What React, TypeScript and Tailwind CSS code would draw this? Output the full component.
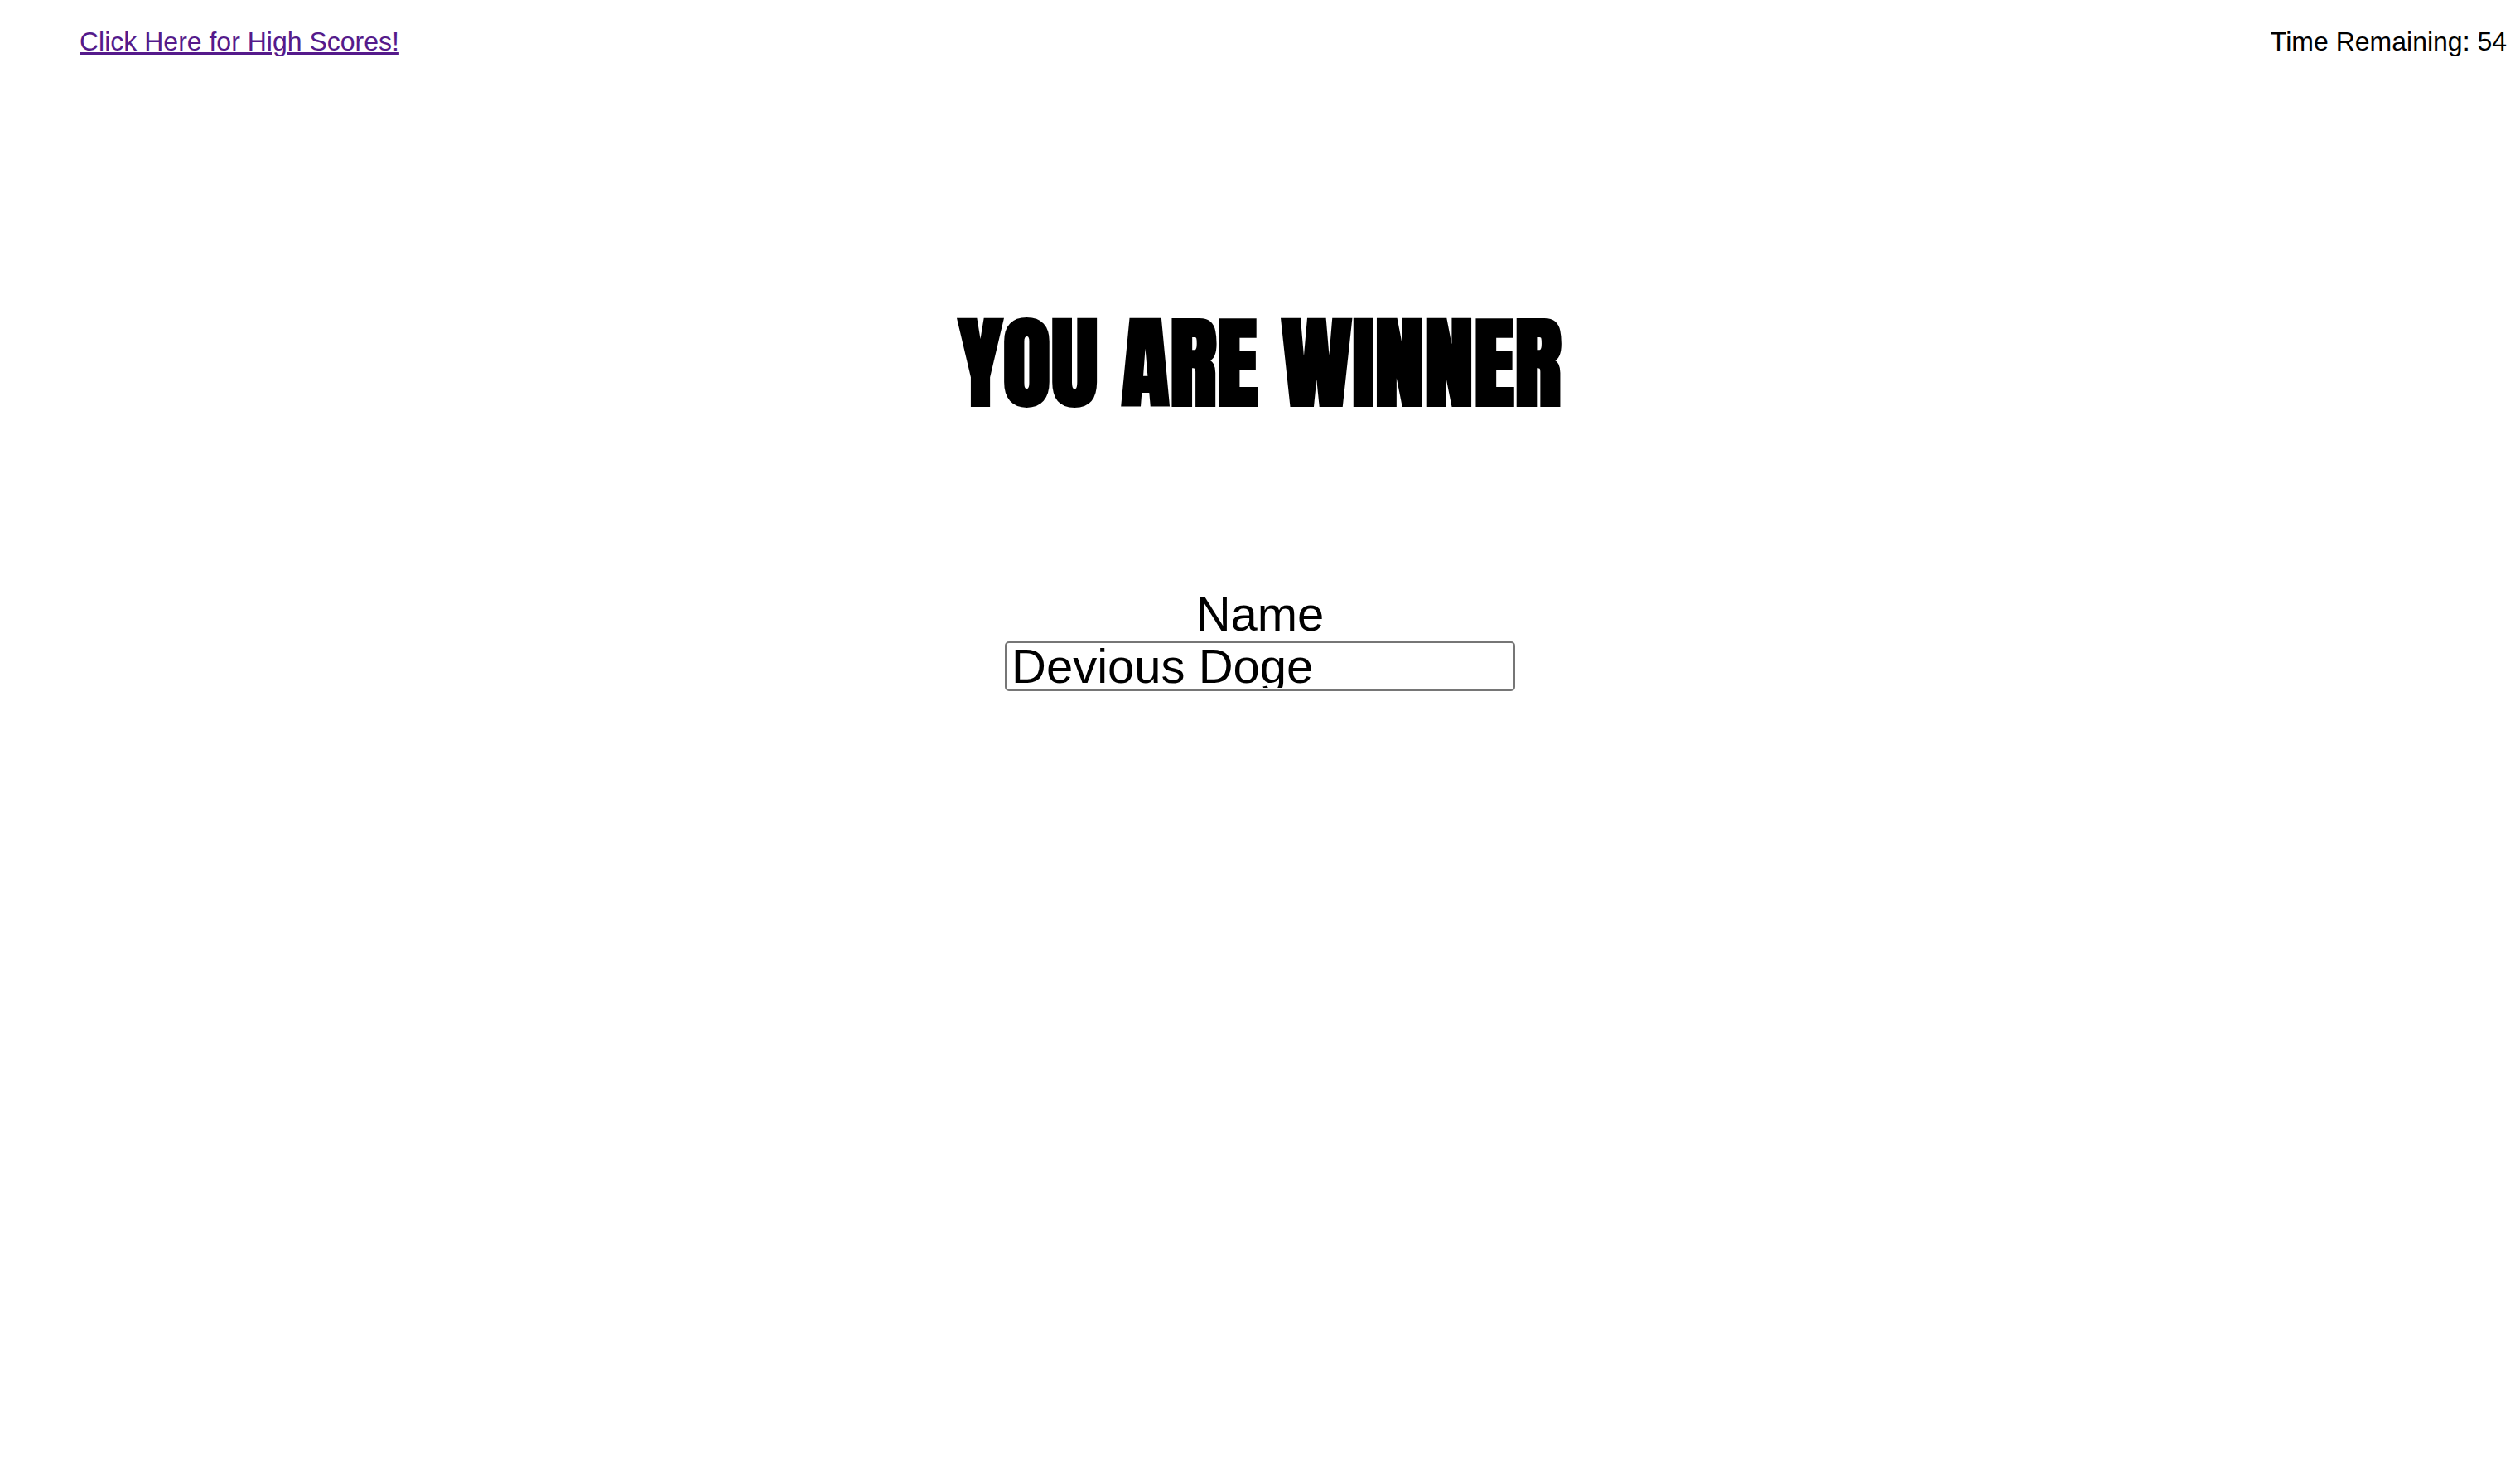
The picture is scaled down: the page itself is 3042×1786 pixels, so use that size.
import { useState } from "react";

export default function App() {
  const [name, setName] = useState("Devious Doge");

  return (
    <div className="min-h-screen bg-white font-['Liberation_Sans',Arial,sans-serif] text-[32px] leading-9 text-black">
      <header className="flex items-center justify-between pt-8 pr-4 pl-24">
        <a href="#scores" className="text-[#551a8b] underline decoration-3">
          Click Here for High Scores!
        </a>
        <p>Time Remaining: 54</p>
      </header>
      <main className="flex flex-col items-center">
        <h1 className="mt-74 font-[Impact,Anton,'Roboto_Condensed',sans-serif] text-[120px] leading-[148px] font-black">
          YOU ARE WINNER
        </h1>
        <form className="mt-49 flex flex-col items-center" onSubmit={(e) => e.preventDefault()}>
          <label htmlFor="name" className="text-[58px] leading-[66px]">
            Name
          </label>
          <div className="flex w-[616px] rounded-[5px] border-2 border-[#767676] bg-white px-1.5 py-0.5">
            <input
              id="name"
              type="text"
              value={name}
              onChange={(e) => setName(e.target.value)}
              className="h-[52px] w-full text-[58px] leading-[66px] outline-none"
            />
          </div>
        </form>
      </main>
    </div>
  );
}
